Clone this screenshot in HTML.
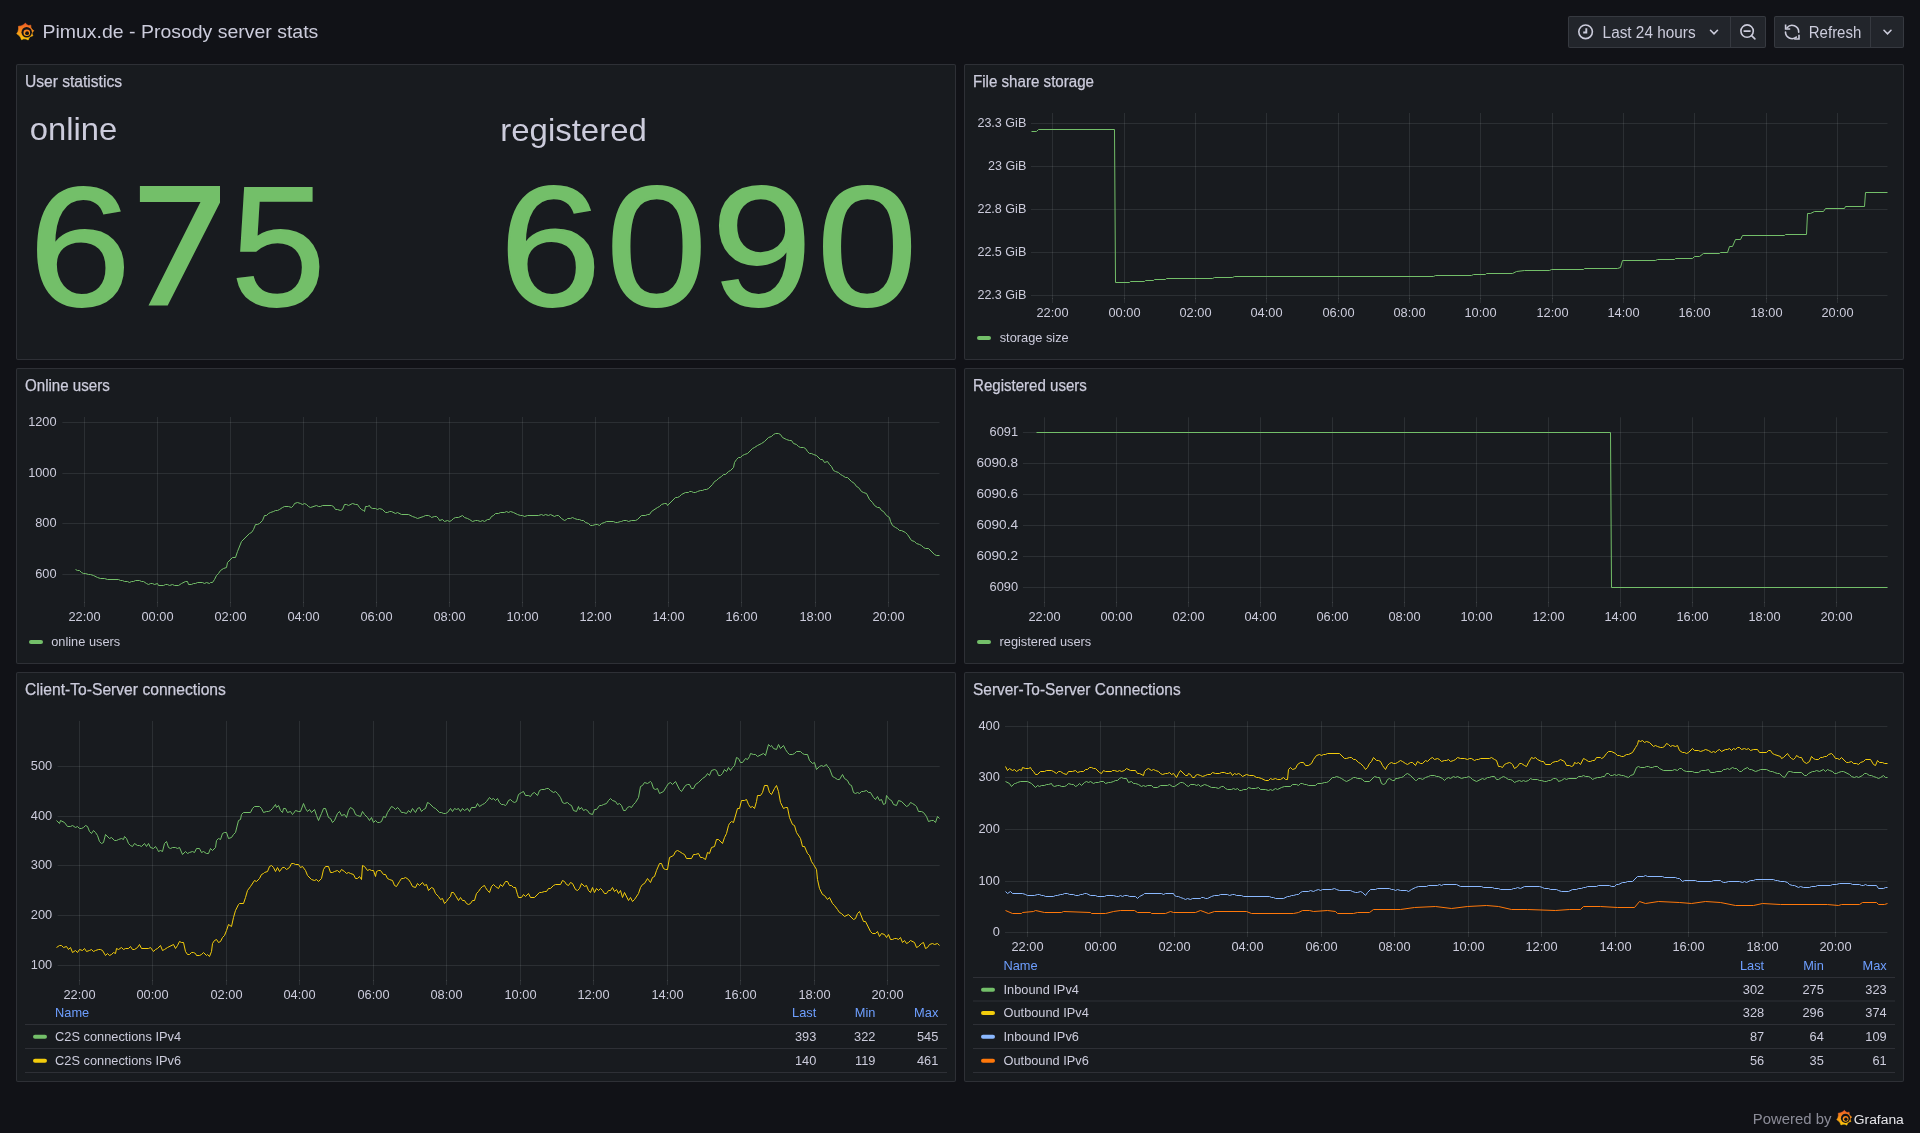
<!DOCTYPE html>
<html><head><meta charset="utf-8"><title>Pimux.de - Prosody server stats</title>
<style>
html,body{margin:0;padding:0;background:#111217;width:1920px;height:1133px;overflow:hidden;font-family:"Liberation Sans", sans-serif;}
.panel{position:absolute;background:#181b1f;border:1px solid rgba(204,204,220,0.12);border-radius:2px;}
.btn{position:absolute;background:#22252b;border:1px solid rgba(204,204,220,0.12);border-radius:2px;box-sizing:border-box;}
svg.ov{position:absolute;left:0;top:0;will-change:transform;}
svg text{font-family:"Liberation Sans", sans-serif;}
</style></head><body>
<div class="panel" style="left:16px;top:64px;width:938px;height:294px"></div><div class="panel" style="left:964px;top:64px;width:938px;height:294px"></div><div class="panel" style="left:16px;top:368px;width:938px;height:294px"></div><div class="panel" style="left:964px;top:368px;width:938px;height:294px"></div><div class="panel" style="left:16px;top:672px;width:938px;height:408px"></div><div class="panel" style="left:964px;top:672px;width:938px;height:408px"></div>
<div class="btn" style="left:1568px;top:16px;width:198px;height:32px"></div>
<div style="position:absolute;left:1730px;top:17px;width:1px;height:30px;background:rgba(204,204,220,0.12)"></div>
<div class="btn" style="left:1774px;top:16px;width:130px;height:32px"></div>
<div style="position:absolute;left:1870px;top:17px;width:1px;height:30px;background:rgba(204,204,220,0.12)"></div>
<svg class="ov" width="1920" height="1133" viewBox="0 0 1920 1133">
<line x1="1031" y1="123.5" x2="1887.5" y2="123.5" stroke="rgba(240,250,255,0.09)" stroke-width="1"/><line x1="1031" y1="166.5" x2="1887.5" y2="166.5" stroke="rgba(240,250,255,0.09)" stroke-width="1"/><line x1="1031" y1="209.5" x2="1887.5" y2="209.5" stroke="rgba(240,250,255,0.09)" stroke-width="1"/><line x1="1031" y1="252.5" x2="1887.5" y2="252.5" stroke="rgba(240,250,255,0.09)" stroke-width="1"/><line x1="1031" y1="295.5" x2="1887.5" y2="295.5" stroke="rgba(240,250,255,0.09)" stroke-width="1"/><line x1="1052.5" y1="113" x2="1052.5" y2="299" stroke="rgba(240,250,255,0.09)" stroke-width="1"/><line x1="1052.5" y1="298" x2="1052.5" y2="303" stroke="rgba(240,250,255,0.09)" stroke-width="1"/><line x1="1124.5" y1="113" x2="1124.5" y2="299" stroke="rgba(240,250,255,0.09)" stroke-width="1"/><line x1="1124.5" y1="298" x2="1124.5" y2="303" stroke="rgba(240,250,255,0.09)" stroke-width="1"/><line x1="1195.5" y1="113" x2="1195.5" y2="299" stroke="rgba(240,250,255,0.09)" stroke-width="1"/><line x1="1195.5" y1="298" x2="1195.5" y2="303" stroke="rgba(240,250,255,0.09)" stroke-width="1"/><line x1="1266.5" y1="113" x2="1266.5" y2="299" stroke="rgba(240,250,255,0.09)" stroke-width="1"/><line x1="1266.5" y1="298" x2="1266.5" y2="303" stroke="rgba(240,250,255,0.09)" stroke-width="1"/><line x1="1338.5" y1="113" x2="1338.5" y2="299" stroke="rgba(240,250,255,0.09)" stroke-width="1"/><line x1="1338.5" y1="298" x2="1338.5" y2="303" stroke="rgba(240,250,255,0.09)" stroke-width="1"/><line x1="1409.5" y1="113" x2="1409.5" y2="299" stroke="rgba(240,250,255,0.09)" stroke-width="1"/><line x1="1409.5" y1="298" x2="1409.5" y2="303" stroke="rgba(240,250,255,0.09)" stroke-width="1"/><line x1="1480.5" y1="113" x2="1480.5" y2="299" stroke="rgba(240,250,255,0.09)" stroke-width="1"/><line x1="1480.5" y1="298" x2="1480.5" y2="303" stroke="rgba(240,250,255,0.09)" stroke-width="1"/><line x1="1552.5" y1="113" x2="1552.5" y2="299" stroke="rgba(240,250,255,0.09)" stroke-width="1"/><line x1="1552.5" y1="298" x2="1552.5" y2="303" stroke="rgba(240,250,255,0.09)" stroke-width="1"/><line x1="1623.5" y1="113" x2="1623.5" y2="299" stroke="rgba(240,250,255,0.09)" stroke-width="1"/><line x1="1623.5" y1="298" x2="1623.5" y2="303" stroke="rgba(240,250,255,0.09)" stroke-width="1"/><line x1="1694.5" y1="113" x2="1694.5" y2="299" stroke="rgba(240,250,255,0.09)" stroke-width="1"/><line x1="1694.5" y1="298" x2="1694.5" y2="303" stroke="rgba(240,250,255,0.09)" stroke-width="1"/><line x1="1766.5" y1="113" x2="1766.5" y2="299" stroke="rgba(240,250,255,0.09)" stroke-width="1"/><line x1="1766.5" y1="298" x2="1766.5" y2="303" stroke="rgba(240,250,255,0.09)" stroke-width="1"/><line x1="1837.5" y1="113" x2="1837.5" y2="299" stroke="rgba(240,250,255,0.09)" stroke-width="1"/><line x1="1837.5" y1="298" x2="1837.5" y2="303" stroke="rgba(240,250,255,0.09)" stroke-width="1"/><text x="1026.3" y="126.7" font-size="12.8" fill="#ccccdc" text-anchor="end" font-weight="400"  textLength="48.9" lengthAdjust="spacingAndGlyphs">23.3 GiB</text><text x="1026.3" y="169.7" font-size="12.8" fill="#ccccdc" text-anchor="end" font-weight="400"  textLength="38.3" lengthAdjust="spacingAndGlyphs">23 GiB</text><text x="1026.3" y="212.7" font-size="12.8" fill="#ccccdc" text-anchor="end" font-weight="400"  textLength="48.9" lengthAdjust="spacingAndGlyphs">22.8 GiB</text><text x="1026.3" y="255.7" font-size="12.8" fill="#ccccdc" text-anchor="end" font-weight="400"  textLength="48.9" lengthAdjust="spacingAndGlyphs">22.5 GiB</text><text x="1026.3" y="298.7" font-size="12.8" fill="#ccccdc" text-anchor="end" font-weight="400"  textLength="48.9" lengthAdjust="spacingAndGlyphs">22.3 GiB</text><text x="1052.5" y="316.8" font-size="12.8" fill="#ccccdc" text-anchor="middle" font-weight="400" >22:00</text><text x="1124.5" y="316.8" font-size="12.8" fill="#ccccdc" text-anchor="middle" font-weight="400" >00:00</text><text x="1195.5" y="316.8" font-size="12.8" fill="#ccccdc" text-anchor="middle" font-weight="400" >02:00</text><text x="1266.5" y="316.8" font-size="12.8" fill="#ccccdc" text-anchor="middle" font-weight="400" >04:00</text><text x="1338.5" y="316.8" font-size="12.8" fill="#ccccdc" text-anchor="middle" font-weight="400" >06:00</text><text x="1409.5" y="316.8" font-size="12.8" fill="#ccccdc" text-anchor="middle" font-weight="400" >08:00</text><text x="1480.5" y="316.8" font-size="12.8" fill="#ccccdc" text-anchor="middle" font-weight="400" >10:00</text><text x="1552.5" y="316.8" font-size="12.8" fill="#ccccdc" text-anchor="middle" font-weight="400" >12:00</text><text x="1623.5" y="316.8" font-size="12.8" fill="#ccccdc" text-anchor="middle" font-weight="400" >14:00</text><text x="1694.5" y="316.8" font-size="12.8" fill="#ccccdc" text-anchor="middle" font-weight="400" >16:00</text><text x="1766.5" y="316.8" font-size="12.8" fill="#ccccdc" text-anchor="middle" font-weight="400" >18:00</text><text x="1837.5" y="316.8" font-size="12.8" fill="#ccccdc" text-anchor="middle" font-weight="400" >20:00</text><polyline points="1031.5,131.5 1036.5,131.5 1038.5,129.5 1114.5,129.5 1115.5,282.5 1129.5,282.5 1130.5,281.5 1144.5,281.5 1145.5,280.5 1153.5,280.5 1154.5,279.5 1165.5,279.5 1166.5,278.5 1212.5,278.5 1214.5,277.5 1232.5,277.5 1234.5,276.5 1433.5,276.5 1435.5,275.5 1471.5,275.5 1473.5,274.5 1485.5,274.5 1486.5,273.5 1512.5,273.5 1516.5,271.5 1524.5,270.5 1549.5,270.5 1551.5,269.5 1583.5,269.5 1584.5,268.5 1617.5,268.5 1620.5,267.5 1622.5,260.5 1655.5,260.5 1657.5,259.5 1674.5,259.5 1675.5,258.5 1692.5,258.5 1694.5,256.5 1699.5,256.5 1703.5,253.5 1719.5,253.5 1720.5,252.5 1727.5,252.5 1729.5,246.5 1732.5,246.5 1735.5,239.5 1740.5,239.5 1742.5,235.5 1784.5,235.5 1785.5,234.5 1806.5,234.5 1807.5,213.5 1810.5,213.5 1814.5,211.5 1823.5,211.5 1825.5,208.5 1844.5,208.5 1845.5,206.5 1864.5,206.5 1865.5,192.5 1887.5,192.5" fill="none" stroke="#73bf69" stroke-width="1" stroke-linejoin="miter"/><rect x="977" y="336" width="14" height="4" fill="#73bf69" rx="2"/><text x="999.7" y="342" font-size="12.8" fill="#ccccdc" text-anchor="start" font-weight="400" >storage size</text><line x1="62.4" y1="422.5" x2="939.5" y2="422.5" stroke="rgba(240,250,255,0.09)" stroke-width="1"/><line x1="62.4" y1="473.5" x2="939.5" y2="473.5" stroke="rgba(240,250,255,0.09)" stroke-width="1"/><line x1="62.4" y1="523.5" x2="939.5" y2="523.5" stroke="rgba(240,250,255,0.09)" stroke-width="1"/><line x1="62.4" y1="574.5" x2="939.5" y2="574.5" stroke="rgba(240,250,255,0.09)" stroke-width="1"/><line x1="84.5" y1="417" x2="84.5" y2="603" stroke="rgba(240,250,255,0.09)" stroke-width="1"/><line x1="84.5" y1="602" x2="84.5" y2="607" stroke="rgba(240,250,255,0.09)" stroke-width="1"/><line x1="157.5" y1="417" x2="157.5" y2="603" stroke="rgba(240,250,255,0.09)" stroke-width="1"/><line x1="157.5" y1="602" x2="157.5" y2="607" stroke="rgba(240,250,255,0.09)" stroke-width="1"/><line x1="230.5" y1="417" x2="230.5" y2="603" stroke="rgba(240,250,255,0.09)" stroke-width="1"/><line x1="230.5" y1="602" x2="230.5" y2="607" stroke="rgba(240,250,255,0.09)" stroke-width="1"/><line x1="303.5" y1="417" x2="303.5" y2="603" stroke="rgba(240,250,255,0.09)" stroke-width="1"/><line x1="303.5" y1="602" x2="303.5" y2="607" stroke="rgba(240,250,255,0.09)" stroke-width="1"/><line x1="376.5" y1="417" x2="376.5" y2="603" stroke="rgba(240,250,255,0.09)" stroke-width="1"/><line x1="376.5" y1="602" x2="376.5" y2="607" stroke="rgba(240,250,255,0.09)" stroke-width="1"/><line x1="449.5" y1="417" x2="449.5" y2="603" stroke="rgba(240,250,255,0.09)" stroke-width="1"/><line x1="449.5" y1="602" x2="449.5" y2="607" stroke="rgba(240,250,255,0.09)" stroke-width="1"/><line x1="522.5" y1="417" x2="522.5" y2="603" stroke="rgba(240,250,255,0.09)" stroke-width="1"/><line x1="522.5" y1="602" x2="522.5" y2="607" stroke="rgba(240,250,255,0.09)" stroke-width="1"/><line x1="595.5" y1="417" x2="595.5" y2="603" stroke="rgba(240,250,255,0.09)" stroke-width="1"/><line x1="595.5" y1="602" x2="595.5" y2="607" stroke="rgba(240,250,255,0.09)" stroke-width="1"/><line x1="668.5" y1="417" x2="668.5" y2="603" stroke="rgba(240,250,255,0.09)" stroke-width="1"/><line x1="668.5" y1="602" x2="668.5" y2="607" stroke="rgba(240,250,255,0.09)" stroke-width="1"/><line x1="741.5" y1="417" x2="741.5" y2="603" stroke="rgba(240,250,255,0.09)" stroke-width="1"/><line x1="741.5" y1="602" x2="741.5" y2="607" stroke="rgba(240,250,255,0.09)" stroke-width="1"/><line x1="815.5" y1="417" x2="815.5" y2="603" stroke="rgba(240,250,255,0.09)" stroke-width="1"/><line x1="815.5" y1="602" x2="815.5" y2="607" stroke="rgba(240,250,255,0.09)" stroke-width="1"/><line x1="888.5" y1="417" x2="888.5" y2="603" stroke="rgba(240,250,255,0.09)" stroke-width="1"/><line x1="888.5" y1="602" x2="888.5" y2="607" stroke="rgba(240,250,255,0.09)" stroke-width="1"/><text x="56.6" y="426.09999999999997" font-size="12.8" fill="#ccccdc" text-anchor="end" font-weight="400" >1200</text><text x="56.6" y="476.7" font-size="12.8" fill="#ccccdc" text-anchor="end" font-weight="400" >1000</text><text x="56.6" y="527.1" font-size="12.8" fill="#ccccdc" text-anchor="end" font-weight="400" >800</text><text x="56.6" y="578.0" font-size="12.8" fill="#ccccdc" text-anchor="end" font-weight="400" >600</text><text x="84.5" y="621.4" font-size="12.8" fill="#ccccdc" text-anchor="middle" font-weight="400" >22:00</text><text x="157.5" y="621.4" font-size="12.8" fill="#ccccdc" text-anchor="middle" font-weight="400" >00:00</text><text x="230.5" y="621.4" font-size="12.8" fill="#ccccdc" text-anchor="middle" font-weight="400" >02:00</text><text x="303.5" y="621.4" font-size="12.8" fill="#ccccdc" text-anchor="middle" font-weight="400" >04:00</text><text x="376.5" y="621.4" font-size="12.8" fill="#ccccdc" text-anchor="middle" font-weight="400" >06:00</text><text x="449.5" y="621.4" font-size="12.8" fill="#ccccdc" text-anchor="middle" font-weight="400" >08:00</text><text x="522.5" y="621.4" font-size="12.8" fill="#ccccdc" text-anchor="middle" font-weight="400" >10:00</text><text x="595.5" y="621.4" font-size="12.8" fill="#ccccdc" text-anchor="middle" font-weight="400" >12:00</text><text x="668.5" y="621.4" font-size="12.8" fill="#ccccdc" text-anchor="middle" font-weight="400" >14:00</text><text x="741.5" y="621.4" font-size="12.8" fill="#ccccdc" text-anchor="middle" font-weight="400" >16:00</text><text x="815.5" y="621.4" font-size="12.8" fill="#ccccdc" text-anchor="middle" font-weight="400" >18:00</text><text x="888.5" y="621.4" font-size="12.8" fill="#ccccdc" text-anchor="middle" font-weight="400" >20:00</text><polyline points="75.5,569.5 77.5,570.5 79.5,570.5 81.5,572.5 83.5,573.5 85.5,573.5 88.5,574.5 90.5,574.5 93.5,575.5 97.5,577.5 100.5,578.5 104.5,578.5 107.5,579.5 118.5,579.5 120.5,580.5 122.5,580.5 124.5,581.5 127.5,581.5 129.5,582.5 131.5,581.5 133.5,581.5 135.5,580.5 139.5,580.5 141.5,581.5 143.5,581.5 146.5,583.5 148.5,584.5 150.5,583.5 152.5,583.5 154.5,584.5 157.5,583.5 158.5,585.5 163.5,585.5 165.5,584.5 167.5,584.5 169.5,585.5 172.5,584.5 174.5,585.5 178.5,585.5 181.5,583.5 185.5,581.5 187.5,581.5 188.5,584.5 191.5,584.5 193.5,583.5 195.5,583.5 197.5,582.5 202.5,582.5 204.5,583.5 206.5,582.5 209.5,583.5 210.5,582.5 212.5,582.5 214.5,579.5 216.5,575.5 218.5,573.5 220.5,570.5 223.5,568.5 226.5,567.5 227.5,562.5 232.5,557.5 235.5,557.5 237.5,551.5 241.5,541.5 249.5,533.5 251.5,532.5 253.5,529.5 255.5,524.5 257.5,524.5 259.5,523.5 262.5,520.5 264.5,515.5 266.5,515.5 268.5,513.5 270.5,512.5 273.5,511.5 275.5,510.5 277.5,510.5 279.5,509.5 282.5,507.5 284.5,506.5 288.5,506.5 291.5,507.5 293.5,505.5 294.5,503.5 297.5,502.5 300.5,503.5 302.5,504.5 304.5,503.5 306.5,504.5 308.5,506.5 310.5,507.5 316.5,505.5 318.5,506.5 320.5,506.5 322.5,505.5 331.5,505.5 333.5,506.5 335.5,509.5 337.5,509.5 340.5,510.5 342.5,509.5 344.5,504.5 346.5,504.5 348.5,505.5 352.5,503.5 355.5,504.5 357.5,504.5 359.5,507.5 361.5,509.5 363.5,510.5 364.5,511.5 365.5,506.5 367.5,506.5 369.5,505.5 370.5,507.5 372.5,508.5 375.5,508.5 377.5,509.5 379.5,508.5 382.5,509.5 385.5,512.5 387.5,512.5 389.5,511.5 391.5,511.5 395.5,513.5 397.5,512.5 401.5,514.5 408.5,514.5 412.5,516.5 415.5,517.5 417.5,518.5 423.5,516.5 425.5,515.5 428.5,515.5 430.5,516.5 431.5,517.5 434.5,516.5 436.5,516.5 438.5,518.5 439.5,520.5 442.5,519.5 444.5,521.5 447.5,520.5 449.5,521.5 451.5,520.5 453.5,518.5 455.5,517.5 458.5,517.5 462.5,515.5 464.5,517.5 467.5,518.5 469.5,519.5 472.5,521.5 475.5,520.5 477.5,520.5 480.5,521.5 482.5,520.5 484.5,521.5 487.5,519.5 489.5,519.5 491.5,516.5 493.5,515.5 495.5,513.5 498.5,513.5 500.5,512.5 504.5,512.5 506.5,511.5 508.5,512.5 510.5,511.5 513.5,512.5 517.5,514.5 520.5,515.5 522.5,515.5 524.5,516.5 527.5,515.5 538.5,515.5 541.5,514.5 543.5,515.5 545.5,514.5 548.5,515.5 550.5,514.5 554.5,516.5 556.5,515.5 558.5,515.5 561.5,518.5 564.5,520.5 566.5,519.5 567.5,518.5 570.5,518.5 572.5,517.5 574.5,518.5 577.5,519.5 579.5,519.5 581.5,520.5 583.5,520.5 585.5,522.5 588.5,523.5 590.5,525.5 592.5,525.5 595.5,524.5 597.5,524.5 599.5,525.5 601.5,523.5 604.5,522.5 606.5,521.5 613.5,521.5 615.5,522.5 617.5,522.5 620.5,521.5 621.5,521.5 623.5,520.5 626.5,520.5 628.5,521.5 631.5,520.5 635.5,520.5 637.5,519.5 641.5,515.5 645.5,515.5 647.5,514.5 649.5,514.5 651.5,511.5 657.5,507.5 659.5,506.5 661.5,504.5 664.5,503.5 666.5,503.5 667.5,505.5 675.5,497.5 677.5,497.5 679.5,496.5 681.5,494.5 685.5,492.5 688.5,492.5 689.5,491.5 691.5,491.5 693.5,492.5 695.5,492.5 697.5,491.5 700.5,490.5 702.5,490.5 704.5,489.5 706.5,489.5 708.5,488.5 712.5,484.5 714.5,481.5 716.5,480.5 718.5,478.5 721.5,476.5 723.5,474.5 725.5,474.5 728.5,471.5 730.5,470.5 733.5,467.5 734.5,462.5 736.5,459.5 738.5,457.5 740.5,457.5 742.5,455.5 744.5,454.5 747.5,453.5 752.5,448.5 754.5,447.5 757.5,445.5 761.5,443.5 764.5,441.5 768.5,437.5 771.5,436.5 773.5,434.5 775.5,433.5 778.5,433.5 780.5,434.5 782.5,437.5 786.5,439.5 789.5,440.5 791.5,440.5 793.5,443.5 796.5,444.5 798.5,446.5 800.5,447.5 803.5,447.5 805.5,448.5 807.5,451.5 809.5,453.5 811.5,453.5 813.5,454.5 816.5,455.5 820.5,459.5 822.5,459.5 824.5,462.5 827.5,461.5 829.5,464.5 831.5,466.5 833.5,470.5 835.5,471.5 838.5,472.5 840.5,474.5 842.5,475.5 845.5,477.5 847.5,477.5 851.5,481.5 854.5,483.5 856.5,486.5 858.5,487.5 861.5,491.5 863.5,492.5 866.5,493.5 869.5,499.5 872.5,502.5 874.5,505.5 877.5,507.5 879.5,507.5 881.5,510.5 883.5,511.5 886.5,515.5 889.5,517.5 890.5,521.5 892.5,525.5 895.5,527.5 897.5,528.5 899.5,530.5 901.5,530.5 905.5,532.5 907.5,534.5 911.5,540.5 914.5,541.5 916.5,543.5 919.5,544.5 921.5,545.5 923.5,547.5 925.5,548.5 928.5,548.5 934.5,554.5 936.5,555.5 939.5,555.5" fill="none" stroke="#73bf69" stroke-width="1" stroke-linejoin="miter"/><rect x="29" y="640" width="14" height="4" fill="#73bf69" rx="2"/><text x="51.2" y="646" font-size="12.8" fill="#ccccdc" text-anchor="start" font-weight="400" >online users</text><line x1="1022.9" y1="432.5" x2="1887.7" y2="432.5" stroke="rgba(240,250,255,0.09)" stroke-width="1"/><line x1="1022.9" y1="463.5" x2="1887.7" y2="463.5" stroke="rgba(240,250,255,0.09)" stroke-width="1"/><line x1="1022.9" y1="494.5" x2="1887.7" y2="494.5" stroke="rgba(240,250,255,0.09)" stroke-width="1"/><line x1="1022.9" y1="525.5" x2="1887.7" y2="525.5" stroke="rgba(240,250,255,0.09)" stroke-width="1"/><line x1="1022.9" y1="556.5" x2="1887.7" y2="556.5" stroke="rgba(240,250,255,0.09)" stroke-width="1"/><line x1="1022.9" y1="587.5" x2="1887.7" y2="587.5" stroke="rgba(240,250,255,0.09)" stroke-width="1"/><line x1="1044.5" y1="417.3" x2="1044.5" y2="603" stroke="rgba(240,250,255,0.09)" stroke-width="1"/><line x1="1044.5" y1="602" x2="1044.5" y2="607" stroke="rgba(240,250,255,0.09)" stroke-width="1"/><line x1="1116.5" y1="417.3" x2="1116.5" y2="603" stroke="rgba(240,250,255,0.09)" stroke-width="1"/><line x1="1116.5" y1="602" x2="1116.5" y2="607" stroke="rgba(240,250,255,0.09)" stroke-width="1"/><line x1="1188.5" y1="417.3" x2="1188.5" y2="603" stroke="rgba(240,250,255,0.09)" stroke-width="1"/><line x1="1188.5" y1="602" x2="1188.5" y2="607" stroke="rgba(240,250,255,0.09)" stroke-width="1"/><line x1="1260.5" y1="417.3" x2="1260.5" y2="603" stroke="rgba(240,250,255,0.09)" stroke-width="1"/><line x1="1260.5" y1="602" x2="1260.5" y2="607" stroke="rgba(240,250,255,0.09)" stroke-width="1"/><line x1="1332.5" y1="417.3" x2="1332.5" y2="603" stroke="rgba(240,250,255,0.09)" stroke-width="1"/><line x1="1332.5" y1="602" x2="1332.5" y2="607" stroke="rgba(240,250,255,0.09)" stroke-width="1"/><line x1="1404.5" y1="417.3" x2="1404.5" y2="603" stroke="rgba(240,250,255,0.09)" stroke-width="1"/><line x1="1404.5" y1="602" x2="1404.5" y2="607" stroke="rgba(240,250,255,0.09)" stroke-width="1"/><line x1="1476.5" y1="417.3" x2="1476.5" y2="603" stroke="rgba(240,250,255,0.09)" stroke-width="1"/><line x1="1476.5" y1="602" x2="1476.5" y2="607" stroke="rgba(240,250,255,0.09)" stroke-width="1"/><line x1="1548.5" y1="417.3" x2="1548.5" y2="603" stroke="rgba(240,250,255,0.09)" stroke-width="1"/><line x1="1548.5" y1="602" x2="1548.5" y2="607" stroke="rgba(240,250,255,0.09)" stroke-width="1"/><line x1="1620.5" y1="417.3" x2="1620.5" y2="603" stroke="rgba(240,250,255,0.09)" stroke-width="1"/><line x1="1620.5" y1="602" x2="1620.5" y2="607" stroke="rgba(240,250,255,0.09)" stroke-width="1"/><line x1="1692.5" y1="417.3" x2="1692.5" y2="603" stroke="rgba(240,250,255,0.09)" stroke-width="1"/><line x1="1692.5" y1="602" x2="1692.5" y2="607" stroke="rgba(240,250,255,0.09)" stroke-width="1"/><line x1="1764.5" y1="417.3" x2="1764.5" y2="603" stroke="rgba(240,250,255,0.09)" stroke-width="1"/><line x1="1764.5" y1="602" x2="1764.5" y2="607" stroke="rgba(240,250,255,0.09)" stroke-width="1"/><line x1="1836.5" y1="417.3" x2="1836.5" y2="603" stroke="rgba(240,250,255,0.09)" stroke-width="1"/><line x1="1836.5" y1="602" x2="1836.5" y2="607" stroke="rgba(240,250,255,0.09)" stroke-width="1"/><text x="1018" y="435.9" font-size="12.8" fill="#ccccdc" text-anchor="end" font-weight="400" >6091</text><text x="1018" y="467.09999999999997" font-size="12.8" fill="#ccccdc" text-anchor="end" font-weight="400"  textLength="41.6" lengthAdjust="spacingAndGlyphs">6090.8</text><text x="1018" y="498.09999999999997" font-size="12.8" fill="#ccccdc" text-anchor="end" font-weight="400"  textLength="41.6" lengthAdjust="spacingAndGlyphs">6090.6</text><text x="1018" y="529.0" font-size="12.8" fill="#ccccdc" text-anchor="end" font-weight="400"  textLength="41.6" lengthAdjust="spacingAndGlyphs">6090.4</text><text x="1018" y="560.0" font-size="12.8" fill="#ccccdc" text-anchor="end" font-weight="400"  textLength="41.6" lengthAdjust="spacingAndGlyphs">6090.2</text><text x="1018" y="590.7" font-size="12.8" fill="#ccccdc" text-anchor="end" font-weight="400" >6090</text><text x="1044.5" y="620.8" font-size="12.8" fill="#ccccdc" text-anchor="middle" font-weight="400" >22:00</text><text x="1116.5" y="620.8" font-size="12.8" fill="#ccccdc" text-anchor="middle" font-weight="400" >00:00</text><text x="1188.5" y="620.8" font-size="12.8" fill="#ccccdc" text-anchor="middle" font-weight="400" >02:00</text><text x="1260.5" y="620.8" font-size="12.8" fill="#ccccdc" text-anchor="middle" font-weight="400" >04:00</text><text x="1332.5" y="620.8" font-size="12.8" fill="#ccccdc" text-anchor="middle" font-weight="400" >06:00</text><text x="1404.5" y="620.8" font-size="12.8" fill="#ccccdc" text-anchor="middle" font-weight="400" >08:00</text><text x="1476.5" y="620.8" font-size="12.8" fill="#ccccdc" text-anchor="middle" font-weight="400" >10:00</text><text x="1548.5" y="620.8" font-size="12.8" fill="#ccccdc" text-anchor="middle" font-weight="400" >12:00</text><text x="1620.5" y="620.8" font-size="12.8" fill="#ccccdc" text-anchor="middle" font-weight="400" >14:00</text><text x="1692.5" y="620.8" font-size="12.8" fill="#ccccdc" text-anchor="middle" font-weight="400" >16:00</text><text x="1764.5" y="620.8" font-size="12.8" fill="#ccccdc" text-anchor="middle" font-weight="400" >18:00</text><text x="1836.5" y="620.8" font-size="12.8" fill="#ccccdc" text-anchor="middle" font-weight="400" >20:00</text><polyline points="1036.5,432.5 1610.5,432.5 1611.5,587.5 1887.5,587.5" fill="none" stroke="#73bf69" stroke-width="1" stroke-linejoin="miter"/><rect x="977" y="640" width="14" height="4" fill="#73bf69" rx="2"/><text x="999.5" y="646" font-size="12.8" fill="#ccccdc" text-anchor="start" font-weight="400" >registered users</text><line x1="57.6" y1="766.5" x2="939.7" y2="766.5" stroke="rgba(240,250,255,0.09)" stroke-width="1"/><line x1="57.6" y1="816.5" x2="939.7" y2="816.5" stroke="rgba(240,250,255,0.09)" stroke-width="1"/><line x1="57.6" y1="865.5" x2="939.7" y2="865.5" stroke="rgba(240,250,255,0.09)" stroke-width="1"/><line x1="57.6" y1="915.5" x2="939.7" y2="915.5" stroke="rgba(240,250,255,0.09)" stroke-width="1"/><line x1="57.6" y1="965.5" x2="939.7" y2="965.5" stroke="rgba(240,250,255,0.09)" stroke-width="1"/><line x1="79.5" y1="720.9" x2="79.5" y2="981" stroke="rgba(240,250,255,0.09)" stroke-width="1"/><line x1="79.5" y1="980" x2="79.5" y2="985" stroke="rgba(240,250,255,0.09)" stroke-width="1"/><line x1="152.5" y1="720.9" x2="152.5" y2="981" stroke="rgba(240,250,255,0.09)" stroke-width="1"/><line x1="152.5" y1="980" x2="152.5" y2="985" stroke="rgba(240,250,255,0.09)" stroke-width="1"/><line x1="226.5" y1="720.9" x2="226.5" y2="981" stroke="rgba(240,250,255,0.09)" stroke-width="1"/><line x1="226.5" y1="980" x2="226.5" y2="985" stroke="rgba(240,250,255,0.09)" stroke-width="1"/><line x1="299.5" y1="720.9" x2="299.5" y2="981" stroke="rgba(240,250,255,0.09)" stroke-width="1"/><line x1="299.5" y1="980" x2="299.5" y2="985" stroke="rgba(240,250,255,0.09)" stroke-width="1"/><line x1="373.5" y1="720.9" x2="373.5" y2="981" stroke="rgba(240,250,255,0.09)" stroke-width="1"/><line x1="373.5" y1="980" x2="373.5" y2="985" stroke="rgba(240,250,255,0.09)" stroke-width="1"/><line x1="446.5" y1="720.9" x2="446.5" y2="981" stroke="rgba(240,250,255,0.09)" stroke-width="1"/><line x1="446.5" y1="980" x2="446.5" y2="985" stroke="rgba(240,250,255,0.09)" stroke-width="1"/><line x1="520.5" y1="720.9" x2="520.5" y2="981" stroke="rgba(240,250,255,0.09)" stroke-width="1"/><line x1="520.5" y1="980" x2="520.5" y2="985" stroke="rgba(240,250,255,0.09)" stroke-width="1"/><line x1="593.5" y1="720.9" x2="593.5" y2="981" stroke="rgba(240,250,255,0.09)" stroke-width="1"/><line x1="593.5" y1="980" x2="593.5" y2="985" stroke="rgba(240,250,255,0.09)" stroke-width="1"/><line x1="667.5" y1="720.9" x2="667.5" y2="981" stroke="rgba(240,250,255,0.09)" stroke-width="1"/><line x1="667.5" y1="980" x2="667.5" y2="985" stroke="rgba(240,250,255,0.09)" stroke-width="1"/><line x1="740.5" y1="720.9" x2="740.5" y2="981" stroke="rgba(240,250,255,0.09)" stroke-width="1"/><line x1="740.5" y1="980" x2="740.5" y2="985" stroke="rgba(240,250,255,0.09)" stroke-width="1"/><line x1="814.5" y1="720.9" x2="814.5" y2="981" stroke="rgba(240,250,255,0.09)" stroke-width="1"/><line x1="814.5" y1="980" x2="814.5" y2="985" stroke="rgba(240,250,255,0.09)" stroke-width="1"/><line x1="887.5" y1="720.9" x2="887.5" y2="981" stroke="rgba(240,250,255,0.09)" stroke-width="1"/><line x1="887.5" y1="980" x2="887.5" y2="985" stroke="rgba(240,250,255,0.09)" stroke-width="1"/><text x="52.2" y="769.8000000000001" font-size="12.8" fill="#ccccdc" text-anchor="end" font-weight="400" >500</text><text x="52.2" y="820.0" font-size="12.8" fill="#ccccdc" text-anchor="end" font-weight="400" >400</text><text x="52.2" y="869.2" font-size="12.8" fill="#ccccdc" text-anchor="end" font-weight="400" >300</text><text x="52.2" y="919.0" font-size="12.8" fill="#ccccdc" text-anchor="end" font-weight="400" >200</text><text x="52.2" y="968.9000000000001" font-size="12.8" fill="#ccccdc" text-anchor="end" font-weight="400" >100</text><text x="79.5" y="998.8" font-size="12.8" fill="#ccccdc" text-anchor="middle" font-weight="400" >22:00</text><text x="152.5" y="998.8" font-size="12.8" fill="#ccccdc" text-anchor="middle" font-weight="400" >00:00</text><text x="226.5" y="998.8" font-size="12.8" fill="#ccccdc" text-anchor="middle" font-weight="400" >02:00</text><text x="299.5" y="998.8" font-size="12.8" fill="#ccccdc" text-anchor="middle" font-weight="400" >04:00</text><text x="373.5" y="998.8" font-size="12.8" fill="#ccccdc" text-anchor="middle" font-weight="400" >06:00</text><text x="446.5" y="998.8" font-size="12.8" fill="#ccccdc" text-anchor="middle" font-weight="400" >08:00</text><text x="520.5" y="998.8" font-size="12.8" fill="#ccccdc" text-anchor="middle" font-weight="400" >10:00</text><text x="593.5" y="998.8" font-size="12.8" fill="#ccccdc" text-anchor="middle" font-weight="400" >12:00</text><text x="667.5" y="998.8" font-size="12.8" fill="#ccccdc" text-anchor="middle" font-weight="400" >14:00</text><text x="740.5" y="998.8" font-size="12.8" fill="#ccccdc" text-anchor="middle" font-weight="400" >16:00</text><text x="814.5" y="998.8" font-size="12.8" fill="#ccccdc" text-anchor="middle" font-weight="400" >18:00</text><text x="887.5" y="998.8" font-size="12.8" fill="#ccccdc" text-anchor="middle" font-weight="400" >20:00</text><polyline points="56.5,820.5 59.5,823.5 60.5,820.5 64.5,822.5 67.5,826.5 70.5,826.5 72.5,825.5 75.5,827.5 77.5,826.5 79.5,828.5 81.5,828.5 83.5,827.5 85.5,825.5 87.5,826.5 89.5,831.5 91.5,833.5 93.5,830.5 95.5,832.5 97.5,835.5 99.5,841.5 101.5,843.5 103.5,842.5 105.5,834.5 109.5,838.5 111.5,837.5 114.5,840.5 116.5,840.5 118.5,839.5 121.5,838.5 123.5,839.5 124.5,836.5 126.5,838.5 128.5,843.5 130.5,845.5 132.5,846.5 134.5,843.5 137.5,845.5 139.5,845.5 141.5,846.5 144.5,843.5 146.5,846.5 148.5,843.5 150.5,847.5 153.5,848.5 155.5,846.5 157.5,849.5 158.5,851.5 160.5,850.5 162.5,851.5 164.5,843.5 166.5,841.5 168.5,847.5 170.5,848.5 172.5,847.5 175.5,847.5 177.5,848.5 179.5,847.5 182.5,854.5 185.5,851.5 187.5,853.5 189.5,852.5 192.5,851.5 194.5,852.5 196.5,848.5 199.5,848.5 201.5,852.5 203.5,851.5 206.5,853.5 208.5,853.5 210.5,848.5 212.5,850.5 215.5,847.5 216.5,840.5 218.5,838.5 220.5,839.5 222.5,833.5 224.5,832.5 226.5,832.5 228.5,838.5 231.5,837.5 233.5,834.5 235.5,832.5 238.5,820.5 240.5,819.5 241.5,814.5 243.5,812.5 250.5,812.5 252.5,808.5 254.5,806.5 259.5,806.5 261.5,808.5 263.5,812.5 266.5,811.5 268.5,811.5 270.5,810.5 272.5,808.5 275.5,804.5 276.5,807.5 278.5,805.5 280.5,810.5 282.5,812.5 283.5,808.5 285.5,808.5 287.5,812.5 290.5,811.5 292.5,814.5 293.5,813.5 295.5,810.5 298.5,811.5 300.5,811.5 303.5,803.5 305.5,808.5 307.5,811.5 309.5,809.5 311.5,812.5 314.5,809.5 316.5,815.5 318.5,820.5 321.5,813.5 323.5,808.5 325.5,808.5 328.5,817.5 330.5,818.5 332.5,822.5 334.5,820.5 337.5,813.5 339.5,811.5 341.5,815.5 344.5,814.5 346.5,817.5 348.5,810.5 350.5,807.5 353.5,809.5 355.5,814.5 357.5,815.5 360.5,816.5 362.5,811.5 364.5,814.5 367.5,817.5 369.5,820.5 371.5,817.5 373.5,822.5 375.5,820.5 377.5,822.5 379.5,822.5 381.5,821.5 383.5,816.5 385.5,817.5 387.5,812.5 391.5,806.5 393.5,807.5 395.5,809.5 397.5,807.5 399.5,809.5 401.5,812.5 403.5,812.5 406.5,813.5 408.5,810.5 410.5,812.5 412.5,808.5 415.5,812.5 417.5,808.5 419.5,807.5 421.5,811.5 423.5,809.5 425.5,808.5 427.5,802.5 429.5,803.5 433.5,807.5 435.5,808.5 439.5,812.5 441.5,812.5 443.5,813.5 445.5,813.5 447.5,812.5 450.5,808.5 452.5,811.5 454.5,808.5 456.5,809.5 458.5,808.5 460.5,811.5 462.5,808.5 464.5,810.5 467.5,808.5 469.5,811.5 471.5,807.5 475.5,807.5 477.5,803.5 479.5,806.5 482.5,804.5 484.5,803.5 486.5,801.5 489.5,797.5 491.5,799.5 493.5,798.5 495.5,800.5 497.5,798.5 499.5,802.5 501.5,804.5 503.5,804.5 505.5,805.5 506.5,804.5 508.5,800.5 510.5,799.5 512.5,801.5 514.5,802.5 516.5,801.5 518.5,794.5 521.5,792.5 523.5,791.5 525.5,795.5 528.5,795.5 530.5,796.5 532.5,793.5 534.5,792.5 537.5,795.5 539.5,790.5 541.5,789.5 544.5,789.5 546.5,788.5 548.5,788.5 550.5,790.5 553.5,792.5 555.5,791.5 557.5,793.5 560.5,797.5 562.5,802.5 564.5,803.5 567.5,802.5 569.5,804.5 571.5,805.5 573.5,810.5 576.5,811.5 578.5,806.5 579.5,809.5 581.5,807.5 583.5,810.5 585.5,809.5 587.5,810.5 589.5,813.5 592.5,814.5 594.5,809.5 596.5,809.5 599.5,805.5 601.5,805.5 603.5,804.5 606.5,803.5 608.5,800.5 610.5,798.5 612.5,800.5 615.5,801.5 617.5,804.5 619.5,803.5 621.5,805.5 623.5,810.5 625.5,810.5 627.5,807.5 629.5,806.5 631.5,807.5 633.5,804.5 635.5,802.5 638.5,797.5 640.5,786.5 642.5,785.5 644.5,782.5 647.5,783.5 650.5,781.5 651.5,782.5 653.5,788.5 655.5,789.5 657.5,788.5 659.5,793.5 663.5,791.5 666.5,786.5 668.5,783.5 670.5,782.5 672.5,784.5 675.5,781.5 679.5,789.5 681.5,791.5 685.5,785.5 687.5,784.5 689.5,784.5 691.5,788.5 693.5,788.5 695.5,784.5 698.5,782.5 702.5,778.5 705.5,776.5 707.5,773.5 709.5,775.5 711.5,770.5 714.5,769.5 716.5,770.5 718.5,775.5 720.5,775.5 722.5,773.5 724.5,769.5 726.5,771.5 728.5,767.5 730.5,770.5 732.5,767.5 734.5,765.5 736.5,757.5 738.5,758.5 740.5,762.5 742.5,762.5 745.5,758.5 747.5,759.5 749.5,756.5 750.5,753.5 753.5,754.5 755.5,754.5 757.5,756.5 763.5,753.5 765.5,755.5 768.5,744.5 770.5,746.5 771.5,745.5 773.5,748.5 776.5,749.5 778.5,744.5 780.5,748.5 783.5,745.5 785.5,749.5 787.5,752.5 789.5,754.5 792.5,754.5 794.5,753.5 796.5,751.5 800.5,751.5 802.5,753.5 804.5,754.5 807.5,754.5 809.5,760.5 812.5,763.5 814.5,762.5 816.5,769.5 819.5,766.5 821.5,765.5 823.5,766.5 826.5,764.5 827.5,766.5 829.5,768.5 832.5,776.5 834.5,777.5 837.5,779.5 839.5,779.5 842.5,774.5 844.5,778.5 847.5,780.5 849.5,784.5 851.5,785.5 853.5,792.5 855.5,793.5 857.5,792.5 859.5,793.5 861.5,791.5 863.5,791.5 866.5,790.5 868.5,792.5 870.5,792.5 873.5,797.5 875.5,799.5 877.5,796.5 879.5,800.5 881.5,799.5 883.5,804.5 885.5,803.5 886.5,795.5 889.5,799.5 891.5,800.5 893.5,804.5 896.5,805.5 898.5,800.5 901.5,801.5 906.5,806.5 908.5,805.5 910.5,802.5 912.5,803.5 915.5,805.5 916.5,806.5 918.5,811.5 921.5,811.5 923.5,812.5 926.5,816.5 928.5,821.5 931.5,820.5 933.5,820.5 935.5,822.5 937.5,816.5 939.5,818.5" fill="none" stroke="#73bf69" stroke-width="1" stroke-linejoin="miter"/><polyline points="56.5,947.5 59.5,945.5 61.5,945.5 63.5,947.5 66.5,946.5 68.5,949.5 70.5,947.5 72.5,952.5 75.5,950.5 77.5,952.5 79.5,949.5 82.5,950.5 84.5,948.5 86.5,951.5 89.5,950.5 91.5,949.5 93.5,951.5 95.5,950.5 98.5,949.5 100.5,949.5 102.5,950.5 105.5,955.5 107.5,953.5 109.5,955.5 111.5,954.5 113.5,952.5 115.5,953.5 116.5,948.5 118.5,949.5 121.5,947.5 123.5,949.5 125.5,948.5 128.5,948.5 130.5,946.5 132.5,949.5 134.5,949.5 137.5,947.5 139.5,944.5 141.5,948.5 148.5,948.5 150.5,947.5 153.5,951.5 155.5,949.5 157.5,948.5 160.5,945.5 162.5,950.5 164.5,949.5 167.5,947.5 173.5,944.5 175.5,948.5 177.5,945.5 179.5,941.5 181.5,942.5 183.5,942.5 185.5,951.5 187.5,954.5 189.5,954.5 191.5,952.5 193.5,952.5 195.5,953.5 196.5,955.5 199.5,955.5 201.5,954.5 203.5,952.5 206.5,955.5 207.5,954.5 209.5,956.5 211.5,951.5 212.5,943.5 214.5,940.5 216.5,939.5 218.5,942.5 220.5,941.5 222.5,937.5 224.5,935.5 226.5,930.5 228.5,924.5 231.5,926.5 233.5,917.5 235.5,910.5 238.5,904.5 239.5,903.5 243.5,903.5 245.5,897.5 247.5,890.5 250.5,886.5 254.5,880.5 256.5,881.5 259.5,878.5 261.5,874.5 263.5,873.5 264.5,872.5 267.5,871.5 269.5,866.5 271.5,865.5 273.5,867.5 275.5,871.5 277.5,867.5 279.5,871.5 282.5,867.5 284.5,867.5 286.5,869.5 289.5,867.5 291.5,863.5 293.5,863.5 295.5,864.5 298.5,864.5 300.5,867.5 302.5,866.5 305.5,870.5 307.5,875.5 311.5,879.5 314.5,880.5 316.5,879.5 318.5,881.5 321.5,878.5 323.5,869.5 325.5,866.5 328.5,866.5 330.5,872.5 332.5,872.5 334.5,871.5 337.5,870.5 339.5,872.5 341.5,869.5 344.5,871.5 346.5,873.5 348.5,872.5 350.5,873.5 353.5,874.5 355.5,878.5 357.5,878.5 359.5,876.5 361.5,879.5 362.5,865.5 364.5,866.5 367.5,870.5 369.5,869.5 371.5,870.5 373.5,870.5 375.5,876.5 376.5,871.5 378.5,870.5 380.5,870.5 383.5,874.5 385.5,874.5 387.5,878.5 389.5,879.5 392.5,880.5 394.5,885.5 396.5,886.5 399.5,881.5 401.5,878.5 403.5,878.5 405.5,877.5 408.5,879.5 410.5,882.5 412.5,886.5 415.5,887.5 417.5,883.5 419.5,885.5 422.5,882.5 424.5,885.5 426.5,884.5 428.5,890.5 431.5,887.5 433.5,888.5 435.5,893.5 438.5,896.5 440.5,899.5 442.5,898.5 444.5,903.5 446.5,901.5 448.5,898.5 450.5,896.5 451.5,892.5 453.5,892.5 455.5,895.5 458.5,900.5 460.5,897.5 462.5,900.5 464.5,900.5 466.5,903.5 468.5,904.5 470.5,903.5 472.5,900.5 474.5,900.5 476.5,893.5 478.5,891.5 480.5,888.5 482.5,886.5 484.5,885.5 485.5,887.5 487.5,890.5 489.5,892.5 491.5,886.5 493.5,884.5 495.5,886.5 498.5,888.5 500.5,884.5 502.5,886.5 505.5,881.5 507.5,881.5 509.5,885.5 511.5,885.5 513.5,887.5 515.5,887.5 517.5,894.5 518.5,897.5 521.5,897.5 523.5,894.5 525.5,896.5 528.5,893.5 530.5,897.5 534.5,897.5 539.5,892.5 541.5,892.5 544.5,891.5 546.5,891.5 548.5,888.5 550.5,888.5 553.5,885.5 555.5,884.5 560.5,884.5 562.5,880.5 564.5,881.5 566.5,884.5 568.5,885.5 570.5,882.5 572.5,883.5 575.5,889.5 577.5,890.5 579.5,888.5 581.5,883.5 584.5,886.5 586.5,885.5 588.5,890.5 590.5,892.5 592.5,887.5 594.5,892.5 596.5,888.5 598.5,890.5 600.5,888.5 602.5,890.5 604.5,893.5 606.5,893.5 608.5,890.5 610.5,890.5 612.5,887.5 614.5,891.5 616.5,889.5 618.5,893.5 620.5,890.5 622.5,897.5 624.5,892.5 628.5,900.5 630.5,897.5 632.5,901.5 634.5,899.5 638.5,893.5 640.5,887.5 642.5,884.5 644.5,883.5 647.5,878.5 650.5,882.5 652.5,877.5 654.5,876.5 656.5,870.5 659.5,863.5 661.5,863.5 663.5,868.5 665.5,869.5 667.5,869.5 669.5,857.5 673.5,855.5 675.5,851.5 677.5,850.5 679.5,851.5 682.5,853.5 684.5,854.5 686.5,858.5 691.5,858.5 693.5,854.5 695.5,854.5 698.5,853.5 700.5,857.5 702.5,857.5 705.5,859.5 707.5,852.5 709.5,853.5 711.5,847.5 714.5,846.5 716.5,839.5 718.5,839.5 722.5,843.5 724.5,837.5 726.5,833.5 728.5,825.5 729.5,823.5 731.5,821.5 733.5,822.5 737.5,808.5 739.5,808.5 741.5,800.5 744.5,800.5 746.5,799.5 748.5,804.5 750.5,807.5 752.5,806.5 754.5,808.5 756.5,801.5 757.5,795.5 760.5,795.5 762.5,792.5 764.5,785.5 767.5,785.5 769.5,792.5 771.5,794.5 774.5,788.5 776.5,785.5 778.5,791.5 780.5,802.5 783.5,808.5 785.5,807.5 787.5,807.5 789.5,817.5 792.5,824.5 794.5,825.5 796.5,832.5 800.5,838.5 802.5,846.5 804.5,846.5 807.5,853.5 809.5,855.5 811.5,861.5 813.5,864.5 816.5,869.5 817.5,879.5 819.5,888.5 822.5,894.5 824.5,895.5 827.5,899.5 829.5,897.5 832.5,903.5 834.5,905.5 837.5,909.5 839.5,912.5 841.5,913.5 844.5,916.5 848.5,914.5 853.5,919.5 855.5,918.5 857.5,913.5 859.5,911.5 863.5,921.5 865.5,921.5 870.5,931.5 872.5,933.5 875.5,933.5 877.5,931.5 879.5,936.5 881.5,933.5 884.5,934.5 886.5,937.5 888.5,934.5 890.5,939.5 892.5,939.5 894.5,938.5 896.5,938.5 898.5,939.5 900.5,937.5 902.5,942.5 904.5,940.5 906.5,943.5 908.5,942.5 910.5,940.5 914.5,942.5 916.5,947.5 918.5,946.5 921.5,943.5 923.5,942.5 925.5,948.5 927.5,947.5 929.5,944.5 932.5,943.5 934.5,944.5 937.5,943.5 939.5,945.5" fill="none" stroke="#f2cc0c" stroke-width="1" stroke-linejoin="miter"/><text x="55.1" y="1017.3" font-size="12.8" fill="#6e9fff" text-anchor="start" font-weight="400" >Name</text><text x="816.3" y="1017.3" font-size="12.8" fill="#6e9fff" text-anchor="end" font-weight="400" >Last</text><text x="875.4" y="1017.3" font-size="12.8" fill="#6e9fff" text-anchor="end" font-weight="400" >Min</text><text x="938.3" y="1017.3" font-size="12.8" fill="#6e9fff" text-anchor="end" font-weight="400" >Max</text><line x1="25" y1="1024.5" x2="947" y2="1024.5" stroke="rgba(204,204,220,0.12)" stroke-width="1"/><line x1="25" y1="1048.5" x2="947" y2="1048.5" stroke="rgba(204,204,220,0.12)" stroke-width="1"/><line x1="25" y1="1072.5" x2="947" y2="1072.5" stroke="rgba(204,204,220,0.12)" stroke-width="1"/><rect x="33" y="1034.8" width="14" height="4" fill="#73bf69" rx="2"/><text x="55.1" y="1040.8" font-size="12.8" fill="#ccccdc" text-anchor="start" font-weight="400" >C2S connections IPv4</text><text x="816.3" y="1040.8" font-size="12.8" fill="#ccccdc" text-anchor="end" font-weight="400" >393</text><text x="875.4" y="1040.8" font-size="12.8" fill="#ccccdc" text-anchor="end" font-weight="400" >322</text><text x="938.3" y="1040.8" font-size="12.8" fill="#ccccdc" text-anchor="end" font-weight="400" >545</text><rect x="33" y="1058.8" width="14" height="4" fill="#f2cc0c" rx="2"/><text x="55.1" y="1064.8" font-size="12.8" fill="#ccccdc" text-anchor="start" font-weight="400" >C2S connections IPv6</text><text x="816.3" y="1064.8" font-size="12.8" fill="#ccccdc" text-anchor="end" font-weight="400" >140</text><text x="875.4" y="1064.8" font-size="12.8" fill="#ccccdc" text-anchor="end" font-weight="400" >119</text><text x="938.3" y="1064.8" font-size="12.8" fill="#ccccdc" text-anchor="end" font-weight="400" >461</text><line x1="1005" y1="726.5" x2="1887.4" y2="726.5" stroke="rgba(240,250,255,0.09)" stroke-width="1"/><line x1="1005" y1="777.5" x2="1887.4" y2="777.5" stroke="rgba(240,250,255,0.09)" stroke-width="1"/><line x1="1005" y1="829.5" x2="1887.4" y2="829.5" stroke="rgba(240,250,255,0.09)" stroke-width="1"/><line x1="1005" y1="881.5" x2="1887.4" y2="881.5" stroke="rgba(240,250,255,0.09)" stroke-width="1"/><line x1="1005" y1="932.5" x2="1887.4" y2="932.5" stroke="rgba(240,250,255,0.09)" stroke-width="1"/><line x1="1027.5" y1="721.2" x2="1027.5" y2="933" stroke="rgba(240,250,255,0.09)" stroke-width="1"/><line x1="1027.5" y1="932" x2="1027.5" y2="937" stroke="rgba(240,250,255,0.09)" stroke-width="1"/><line x1="1100.5" y1="721.2" x2="1100.5" y2="933" stroke="rgba(240,250,255,0.09)" stroke-width="1"/><line x1="1100.5" y1="932" x2="1100.5" y2="937" stroke="rgba(240,250,255,0.09)" stroke-width="1"/><line x1="1174.5" y1="721.2" x2="1174.5" y2="933" stroke="rgba(240,250,255,0.09)" stroke-width="1"/><line x1="1174.5" y1="932" x2="1174.5" y2="937" stroke="rgba(240,250,255,0.09)" stroke-width="1"/><line x1="1247.5" y1="721.2" x2="1247.5" y2="933" stroke="rgba(240,250,255,0.09)" stroke-width="1"/><line x1="1247.5" y1="932" x2="1247.5" y2="937" stroke="rgba(240,250,255,0.09)" stroke-width="1"/><line x1="1321.5" y1="721.2" x2="1321.5" y2="933" stroke="rgba(240,250,255,0.09)" stroke-width="1"/><line x1="1321.5" y1="932" x2="1321.5" y2="937" stroke="rgba(240,250,255,0.09)" stroke-width="1"/><line x1="1394.5" y1="721.2" x2="1394.5" y2="933" stroke="rgba(240,250,255,0.09)" stroke-width="1"/><line x1="1394.5" y1="932" x2="1394.5" y2="937" stroke="rgba(240,250,255,0.09)" stroke-width="1"/><line x1="1468.5" y1="721.2" x2="1468.5" y2="933" stroke="rgba(240,250,255,0.09)" stroke-width="1"/><line x1="1468.5" y1="932" x2="1468.5" y2="937" stroke="rgba(240,250,255,0.09)" stroke-width="1"/><line x1="1541.5" y1="721.2" x2="1541.5" y2="933" stroke="rgba(240,250,255,0.09)" stroke-width="1"/><line x1="1541.5" y1="932" x2="1541.5" y2="937" stroke="rgba(240,250,255,0.09)" stroke-width="1"/><line x1="1615.5" y1="721.2" x2="1615.5" y2="933" stroke="rgba(240,250,255,0.09)" stroke-width="1"/><line x1="1615.5" y1="932" x2="1615.5" y2="937" stroke="rgba(240,250,255,0.09)" stroke-width="1"/><line x1="1688.5" y1="721.2" x2="1688.5" y2="933" stroke="rgba(240,250,255,0.09)" stroke-width="1"/><line x1="1688.5" y1="932" x2="1688.5" y2="937" stroke="rgba(240,250,255,0.09)" stroke-width="1"/><line x1="1762.5" y1="721.2" x2="1762.5" y2="933" stroke="rgba(240,250,255,0.09)" stroke-width="1"/><line x1="1762.5" y1="932" x2="1762.5" y2="937" stroke="rgba(240,250,255,0.09)" stroke-width="1"/><line x1="1835.5" y1="721.2" x2="1835.5" y2="933" stroke="rgba(240,250,255,0.09)" stroke-width="1"/><line x1="1835.5" y1="932" x2="1835.5" y2="937" stroke="rgba(240,250,255,0.09)" stroke-width="1"/><text x="999.8" y="730.0" font-size="12.8" fill="#ccccdc" text-anchor="end" font-weight="400" >400</text><text x="999.8" y="781.4000000000001" font-size="12.8" fill="#ccccdc" text-anchor="end" font-weight="400" >300</text><text x="999.8" y="832.9000000000001" font-size="12.8" fill="#ccccdc" text-anchor="end" font-weight="400" >200</text><text x="999.8" y="884.9000000000001" font-size="12.8" fill="#ccccdc" text-anchor="end" font-weight="400" >100</text><text x="999.8" y="936.1" font-size="12.8" fill="#ccccdc" text-anchor="end" font-weight="400" >0</text><text x="1027.5" y="950.5" font-size="12.8" fill="#ccccdc" text-anchor="middle" font-weight="400" >22:00</text><text x="1100.5" y="950.5" font-size="12.8" fill="#ccccdc" text-anchor="middle" font-weight="400" >00:00</text><text x="1174.5" y="950.5" font-size="12.8" fill="#ccccdc" text-anchor="middle" font-weight="400" >02:00</text><text x="1247.5" y="950.5" font-size="12.8" fill="#ccccdc" text-anchor="middle" font-weight="400" >04:00</text><text x="1321.5" y="950.5" font-size="12.8" fill="#ccccdc" text-anchor="middle" font-weight="400" >06:00</text><text x="1394.5" y="950.5" font-size="12.8" fill="#ccccdc" text-anchor="middle" font-weight="400" >08:00</text><text x="1468.5" y="950.5" font-size="12.8" fill="#ccccdc" text-anchor="middle" font-weight="400" >10:00</text><text x="1541.5" y="950.5" font-size="12.8" fill="#ccccdc" text-anchor="middle" font-weight="400" >12:00</text><text x="1615.5" y="950.5" font-size="12.8" fill="#ccccdc" text-anchor="middle" font-weight="400" >14:00</text><text x="1688.5" y="950.5" font-size="12.8" fill="#ccccdc" text-anchor="middle" font-weight="400" >16:00</text><text x="1762.5" y="950.5" font-size="12.8" fill="#ccccdc" text-anchor="middle" font-weight="400" >18:00</text><text x="1835.5" y="950.5" font-size="12.8" fill="#ccccdc" text-anchor="middle" font-weight="400" >20:00</text><polyline points="1005.5,910.5 1012.5,913.5 1021.5,913.5 1022.5,912.5 1033.5,911.5 1035.5,910.5 1044.5,912.5 1061.5,912.5 1063.5,911.5 1090.5,912.5 1091.5,913.5 1105.5,913.5 1113.5,911.5 1120.5,910.5 1134.5,910.5 1137.5,912.5 1150.5,912.5 1151.5,913.5 1165.5,913.5 1170.5,911.5 1173.5,912.5 1195.5,912.5 1200.5,910.5 1208.5,913.5 1214.5,911.5 1246.5,911.5 1251.5,913.5 1293.5,913.5 1298.5,912.5 1302.5,910.5 1309.5,910.5 1313.5,911.5 1327.5,910.5 1335.5,911.5 1337.5,913.5 1353.5,913.5 1357.5,912.5 1369.5,912.5 1373.5,909.5 1400.5,909.5 1414.5,907.5 1435.5,906.5 1451.5,908.5 1467.5,906.5 1486.5,905.5 1498.5,906.5 1511.5,909.5 1527.5,909.5 1555.5,910.5 1569.5,909.5 1580.5,909.5 1583.5,906.5 1600.5,906.5 1617.5,907.5 1634.5,907.5 1639.5,901.5 1645.5,903.5 1658.5,901.5 1679.5,902.5 1691.5,903.5 1705.5,901.5 1720.5,902.5 1735.5,905.5 1753.5,905.5 1762.5,903.5 1780.5,904.5 1827.5,904.5 1838.5,905.5 1841.5,904.5 1859.5,904.5 1862.5,902.5 1876.5,902.5 1878.5,904.5 1884.5,904.5 1887.5,903.5" fill="none" stroke="#ff780a" stroke-width="1" stroke-linejoin="miter"/><polyline points="1005.5,891.5 1007.5,893.5 1010.5,891.5 1012.5,893.5 1022.5,893.5 1025.5,894.5 1027.5,895.5 1034.5,895.5 1037.5,894.5 1039.5,894.5 1041.5,895.5 1043.5,895.5 1045.5,896.5 1053.5,896.5 1055.5,895.5 1057.5,895.5 1060.5,894.5 1062.5,894.5 1064.5,893.5 1067.5,893.5 1069.5,894.5 1073.5,894.5 1075.5,895.5 1078.5,895.5 1080.5,894.5 1082.5,894.5 1084.5,893.5 1086.5,893.5 1090.5,895.5 1095.5,895.5 1097.5,896.5 1104.5,896.5 1106.5,895.5 1113.5,895.5 1116.5,896.5 1118.5,896.5 1120.5,895.5 1122.5,896.5 1124.5,895.5 1127.5,895.5 1129.5,896.5 1135.5,896.5 1137.5,898.5 1139.5,896.5 1143.5,894.5 1144.5,893.5 1161.5,893.5 1163.5,894.5 1165.5,893.5 1173.5,893.5 1174.5,895.5 1176.5,896.5 1178.5,896.5 1180.5,897.5 1183.5,898.5 1185.5,899.5 1187.5,898.5 1190.5,899.5 1192.5,898.5 1200.5,898.5 1201.5,897.5 1203.5,897.5 1205.5,898.5 1207.5,898.5 1211.5,896.5 1214.5,895.5 1218.5,895.5 1220.5,894.5 1227.5,894.5 1229.5,895.5 1232.5,894.5 1234.5,894.5 1236.5,895.5 1241.5,895.5 1243.5,896.5 1269.5,896.5 1271.5,897.5 1273.5,897.5 1275.5,898.5 1283.5,898.5 1287.5,896.5 1289.5,896.5 1291.5,895.5 1293.5,895.5 1296.5,894.5 1298.5,894.5 1300.5,892.5 1302.5,891.5 1308.5,891.5 1310.5,890.5 1313.5,891.5 1315.5,890.5 1318.5,889.5 1320.5,890.5 1322.5,889.5 1331.5,889.5 1334.5,888.5 1336.5,889.5 1339.5,890.5 1350.5,890.5 1352.5,891.5 1355.5,892.5 1357.5,892.5 1360.5,891.5 1362.5,892.5 1365.5,895.5 1367.5,892.5 1370.5,889.5 1375.5,889.5 1377.5,888.5 1389.5,888.5 1391.5,889.5 1393.5,889.5 1395.5,890.5 1397.5,889.5 1400.5,890.5 1406.5,890.5 1408.5,891.5 1411.5,889.5 1415.5,887.5 1418.5,886.5 1426.5,886.5 1428.5,885.5 1437.5,885.5 1439.5,884.5 1441.5,885.5 1443.5,884.5 1456.5,884.5 1460.5,886.5 1481.5,886.5 1483.5,887.5 1492.5,887.5 1494.5,888.5 1498.5,888.5 1500.5,889.5 1511.5,889.5 1513.5,888.5 1515.5,888.5 1517.5,887.5 1520.5,888.5 1524.5,886.5 1539.5,886.5 1542.5,887.5 1544.5,888.5 1548.5,888.5 1550.5,889.5 1556.5,889.5 1558.5,890.5 1561.5,891.5 1568.5,891.5 1572.5,889.5 1576.5,889.5 1578.5,888.5 1581.5,888.5 1583.5,887.5 1585.5,887.5 1587.5,886.5 1596.5,886.5 1598.5,885.5 1609.5,885.5 1611.5,886.5 1614.5,886.5 1616.5,884.5 1618.5,884.5 1622.5,882.5 1625.5,882.5 1627.5,881.5 1632.5,881.5 1637.5,876.5 1643.5,876.5 1645.5,875.5 1647.5,876.5 1662.5,876.5 1664.5,877.5 1675.5,877.5 1677.5,878.5 1679.5,878.5 1682.5,881.5 1684.5,880.5 1695.5,880.5 1697.5,881.5 1711.5,881.5 1713.5,880.5 1720.5,880.5 1721.5,881.5 1723.5,882.5 1725.5,882.5 1728.5,881.5 1739.5,881.5 1742.5,882.5 1744.5,881.5 1746.5,882.5 1750.5,880.5 1753.5,880.5 1755.5,879.5 1773.5,879.5 1775.5,880.5 1777.5,880.5 1780.5,881.5 1784.5,881.5 1787.5,882.5 1789.5,884.5 1792.5,885.5 1794.5,885.5 1798.5,887.5 1800.5,886.5 1803.5,887.5 1809.5,887.5 1811.5,886.5 1815.5,886.5 1817.5,885.5 1830.5,885.5 1832.5,884.5 1836.5,884.5 1839.5,883.5 1850.5,883.5 1852.5,884.5 1859.5,884.5 1861.5,885.5 1863.5,885.5 1865.5,884.5 1867.5,885.5 1876.5,885.5 1878.5,888.5 1883.5,888.5 1885.5,887.5 1887.5,887.5" fill="none" stroke="#8ab8ff" stroke-width="1" stroke-linejoin="miter"/><polyline points="1005.5,781.5 1009.5,783.5 1011.5,786.5 1014.5,783.5 1015.5,783.5 1017.5,782.5 1020.5,781.5 1027.5,781.5 1031.5,783.5 1035.5,787.5 1037.5,785.5 1039.5,786.5 1041.5,785.5 1044.5,785.5 1046.5,784.5 1048.5,784.5 1051.5,783.5 1052.5,785.5 1054.5,786.5 1057.5,785.5 1059.5,785.5 1061.5,786.5 1064.5,786.5 1066.5,785.5 1068.5,783.5 1071.5,784.5 1073.5,784.5 1075.5,786.5 1077.5,785.5 1079.5,783.5 1081.5,785.5 1084.5,782.5 1086.5,781.5 1088.5,782.5 1090.5,781.5 1093.5,783.5 1095.5,782.5 1098.5,782.5 1100.5,781.5 1103.5,781.5 1105.5,783.5 1108.5,782.5 1110.5,782.5 1113.5,781.5 1115.5,780.5 1117.5,780.5 1119.5,778.5 1121.5,777.5 1123.5,778.5 1126.5,778.5 1128.5,782.5 1131.5,781.5 1133.5,783.5 1135.5,783.5 1138.5,784.5 1141.5,786.5 1143.5,785.5 1145.5,786.5 1147.5,785.5 1151.5,785.5 1153.5,787.5 1157.5,787.5 1160.5,785.5 1167.5,785.5 1169.5,784.5 1172.5,786.5 1174.5,786.5 1180.5,782.5 1182.5,782.5 1184.5,783.5 1186.5,785.5 1188.5,786.5 1190.5,784.5 1194.5,784.5 1196.5,785.5 1198.5,784.5 1200.5,786.5 1204.5,784.5 1207.5,785.5 1211.5,787.5 1215.5,787.5 1218.5,788.5 1221.5,786.5 1223.5,786.5 1225.5,788.5 1227.5,789.5 1231.5,789.5 1233.5,788.5 1235.5,789.5 1237.5,788.5 1239.5,790.5 1241.5,790.5 1243.5,789.5 1246.5,789.5 1248.5,787.5 1251.5,788.5 1255.5,788.5 1258.5,787.5 1260.5,789.5 1265.5,789.5 1268.5,790.5 1270.5,789.5 1272.5,790.5 1275.5,788.5 1277.5,789.5 1281.5,787.5 1284.5,786.5 1290.5,786.5 1292.5,784.5 1296.5,784.5 1298.5,785.5 1300.5,783.5 1302.5,783.5 1304.5,784.5 1306.5,784.5 1308.5,785.5 1315.5,785.5 1317.5,783.5 1321.5,783.5 1324.5,782.5 1326.5,782.5 1328.5,781.5 1332.5,777.5 1334.5,777.5 1336.5,776.5 1339.5,777.5 1341.5,778.5 1344.5,780.5 1346.5,781.5 1350.5,779.5 1353.5,777.5 1355.5,777.5 1357.5,778.5 1360.5,778.5 1362.5,779.5 1364.5,781.5 1369.5,781.5 1374.5,776.5 1377.5,777.5 1379.5,777.5 1381.5,783.5 1383.5,784.5 1385.5,783.5 1387.5,779.5 1389.5,778.5 1392.5,780.5 1394.5,780.5 1395.5,778.5 1397.5,778.5 1400.5,777.5 1401.5,777.5 1403.5,776.5 1405.5,774.5 1407.5,773.5 1410.5,775.5 1415.5,780.5 1416.5,780.5 1418.5,778.5 1420.5,778.5 1422.5,779.5 1425.5,777.5 1428.5,776.5 1430.5,775.5 1434.5,775.5 1436.5,776.5 1438.5,776.5 1442.5,778.5 1444.5,780.5 1446.5,778.5 1448.5,777.5 1450.5,778.5 1453.5,776.5 1455.5,777.5 1457.5,776.5 1461.5,778.5 1464.5,777.5 1466.5,777.5 1468.5,776.5 1470.5,777.5 1472.5,779.5 1476.5,781.5 1482.5,778.5 1484.5,779.5 1487.5,777.5 1489.5,777.5 1491.5,776.5 1494.5,776.5 1496.5,779.5 1498.5,779.5 1501.5,777.5 1503.5,776.5 1505.5,777.5 1508.5,779.5 1510.5,779.5 1512.5,780.5 1514.5,782.5 1516.5,781.5 1519.5,780.5 1521.5,781.5 1523.5,780.5 1525.5,781.5 1528.5,780.5 1530.5,778.5 1532.5,779.5 1537.5,779.5 1539.5,780.5 1541.5,780.5 1544.5,781.5 1546.5,781.5 1548.5,780.5 1550.5,780.5 1553.5,778.5 1555.5,778.5 1557.5,779.5 1558.5,781.5 1561.5,780.5 1564.5,778.5 1566.5,779.5 1568.5,778.5 1576.5,778.5 1578.5,776.5 1581.5,776.5 1583.5,775.5 1585.5,776.5 1588.5,776.5 1590.5,777.5 1592.5,779.5 1594.5,778.5 1597.5,777.5 1600.5,777.5 1602.5,776.5 1604.5,776.5 1606.5,773.5 1608.5,773.5 1610.5,775.5 1612.5,775.5 1614.5,774.5 1616.5,775.5 1618.5,774.5 1621.5,775.5 1623.5,775.5 1625.5,776.5 1628.5,777.5 1630.5,775.5 1633.5,774.5 1636.5,767.5 1638.5,766.5 1640.5,767.5 1644.5,767.5 1646.5,766.5 1648.5,766.5 1650.5,767.5 1652.5,767.5 1654.5,766.5 1657.5,766.5 1659.5,768.5 1663.5,770.5 1672.5,770.5 1674.5,769.5 1677.5,770.5 1679.5,768.5 1681.5,768.5 1683.5,770.5 1686.5,771.5 1692.5,771.5 1694.5,772.5 1698.5,772.5 1701.5,770.5 1705.5,770.5 1708.5,769.5 1710.5,772.5 1714.5,772.5 1716.5,771.5 1721.5,771.5 1723.5,769.5 1725.5,769.5 1727.5,768.5 1729.5,769.5 1732.5,767.5 1734.5,768.5 1736.5,768.5 1739.5,771.5 1741.5,771.5 1743.5,769.5 1747.5,767.5 1749.5,769.5 1751.5,769.5 1755.5,771.5 1758.5,770.5 1760.5,769.5 1766.5,769.5 1770.5,771.5 1772.5,771.5 1774.5,772.5 1777.5,773.5 1779.5,773.5 1782.5,776.5 1784.5,777.5 1788.5,771.5 1790.5,771.5 1793.5,772.5 1801.5,772.5 1804.5,775.5 1806.5,775.5 1808.5,773.5 1812.5,771.5 1814.5,771.5 1816.5,770.5 1819.5,771.5 1823.5,769.5 1825.5,771.5 1827.5,769.5 1829.5,770.5 1832.5,771.5 1834.5,773.5 1836.5,773.5 1838.5,772.5 1841.5,771.5 1843.5,771.5 1849.5,774.5 1851.5,776.5 1854.5,777.5 1856.5,776.5 1858.5,777.5 1862.5,775.5 1864.5,773.5 1866.5,773.5 1869.5,775.5 1871.5,775.5 1873.5,776.5 1876.5,777.5 1878.5,778.5 1880.5,777.5 1883.5,775.5 1885.5,777.5 1887.5,777.5" fill="none" stroke="#73bf69" stroke-width="1" stroke-linejoin="miter"/><polyline points="1005.5,766.5 1007.5,770.5 1009.5,768.5 1012.5,770.5 1014.5,769.5 1016.5,771.5 1019.5,769.5 1021.5,770.5 1022.5,767.5 1025.5,768.5 1028.5,768.5 1030.5,767.5 1031.5,769.5 1033.5,771.5 1035.5,774.5 1037.5,774.5 1040.5,771.5 1044.5,771.5 1046.5,770.5 1051.5,770.5 1053.5,771.5 1056.5,773.5 1058.5,771.5 1060.5,771.5 1063.5,773.5 1066.5,774.5 1068.5,771.5 1072.5,771.5 1075.5,770.5 1077.5,772.5 1080.5,771.5 1083.5,771.5 1085.5,769.5 1087.5,769.5 1089.5,767.5 1091.5,767.5 1093.5,768.5 1095.5,768.5 1099.5,772.5 1101.5,773.5 1103.5,770.5 1105.5,771.5 1111.5,771.5 1112.5,770.5 1114.5,770.5 1117.5,771.5 1119.5,770.5 1121.5,771.5 1124.5,770.5 1126.5,768.5 1130.5,770.5 1135.5,770.5 1137.5,773.5 1139.5,773.5 1143.5,775.5 1144.5,771.5 1146.5,769.5 1148.5,768.5 1151.5,770.5 1153.5,769.5 1155.5,770.5 1158.5,771.5 1160.5,773.5 1162.5,774.5 1165.5,773.5 1167.5,773.5 1169.5,772.5 1171.5,774.5 1173.5,773.5 1176.5,777.5 1178.5,773.5 1180.5,770.5 1185.5,775.5 1187.5,775.5 1188.5,773.5 1190.5,774.5 1192.5,777.5 1194.5,777.5 1195.5,775.5 1197.5,774.5 1200.5,775.5 1202.5,776.5 1205.5,775.5 1207.5,774.5 1210.5,774.5 1212.5,772.5 1215.5,773.5 1219.5,773.5 1221.5,772.5 1224.5,772.5 1226.5,773.5 1228.5,773.5 1230.5,772.5 1232.5,775.5 1234.5,773.5 1236.5,774.5 1238.5,773.5 1240.5,774.5 1242.5,776.5 1246.5,774.5 1249.5,775.5 1253.5,775.5 1256.5,777.5 1258.5,777.5 1261.5,778.5 1265.5,780.5 1268.5,780.5 1270.5,778.5 1272.5,779.5 1275.5,778.5 1277.5,779.5 1280.5,779.5 1283.5,777.5 1285.5,779.5 1287.5,779.5 1288.5,769.5 1290.5,767.5 1292.5,769.5 1295.5,768.5 1297.5,764.5 1300.5,762.5 1303.5,762.5 1305.5,765.5 1308.5,765.5 1311.5,763.5 1313.5,759.5 1316.5,755.5 1319.5,754.5 1321.5,755.5 1323.5,754.5 1325.5,754.5 1327.5,753.5 1339.5,753.5 1344.5,758.5 1346.5,758.5 1349.5,757.5 1351.5,757.5 1353.5,759.5 1355.5,759.5 1358.5,762.5 1360.5,763.5 1363.5,766.5 1365.5,769.5 1367.5,767.5 1369.5,763.5 1371.5,761.5 1373.5,757.5 1376.5,760.5 1378.5,760.5 1380.5,761.5 1382.5,765.5 1385.5,769.5 1387.5,765.5 1389.5,763.5 1391.5,762.5 1393.5,763.5 1395.5,763.5 1397.5,762.5 1400.5,760.5 1402.5,761.5 1405.5,763.5 1407.5,764.5 1410.5,762.5 1412.5,762.5 1415.5,765.5 1417.5,761.5 1420.5,763.5 1422.5,763.5 1425.5,760.5 1427.5,761.5 1430.5,758.5 1432.5,757.5 1434.5,759.5 1437.5,758.5 1439.5,759.5 1441.5,761.5 1444.5,760.5 1446.5,760.5 1448.5,759.5 1450.5,761.5 1453.5,760.5 1455.5,759.5 1457.5,757.5 1460.5,758.5 1464.5,758.5 1467.5,759.5 1469.5,758.5 1471.5,758.5 1474.5,760.5 1476.5,759.5 1478.5,759.5 1480.5,758.5 1489.5,758.5 1491.5,757.5 1494.5,759.5 1496.5,760.5 1498.5,766.5 1500.5,766.5 1502.5,767.5 1504.5,764.5 1506.5,763.5 1509.5,762.5 1511.5,763.5 1512.5,764.5 1514.5,768.5 1517.5,766.5 1519.5,763.5 1521.5,763.5 1524.5,765.5 1526.5,766.5 1528.5,762.5 1531.5,757.5 1533.5,758.5 1535.5,757.5 1537.5,759.5 1541.5,761.5 1543.5,761.5 1545.5,764.5 1550.5,764.5 1552.5,762.5 1555.5,761.5 1557.5,761.5 1560.5,759.5 1564.5,761.5 1566.5,765.5 1569.5,765.5 1571.5,766.5 1573.5,765.5 1574.5,762.5 1576.5,763.5 1578.5,762.5 1580.5,764.5 1583.5,758.5 1585.5,759.5 1588.5,761.5 1590.5,761.5 1592.5,760.5 1594.5,760.5 1596.5,757.5 1600.5,757.5 1601.5,758.5 1603.5,757.5 1606.5,753.5 1608.5,751.5 1611.5,751.5 1615.5,753.5 1617.5,755.5 1619.5,755.5 1621.5,756.5 1623.5,756.5 1626.5,754.5 1628.5,754.5 1632.5,752.5 1635.5,747.5 1637.5,744.5 1638.5,740.5 1640.5,741.5 1642.5,740.5 1644.5,742.5 1646.5,741.5 1649.5,742.5 1653.5,746.5 1655.5,745.5 1657.5,746.5 1660.5,747.5 1662.5,747.5 1664.5,746.5 1666.5,743.5 1668.5,744.5 1670.5,746.5 1672.5,745.5 1675.5,746.5 1677.5,745.5 1679.5,750.5 1682.5,752.5 1684.5,752.5 1686.5,753.5 1688.5,752.5 1692.5,748.5 1694.5,750.5 1698.5,750.5 1700.5,751.5 1703.5,750.5 1705.5,749.5 1708.5,750.5 1711.5,752.5 1713.5,751.5 1715.5,752.5 1717.5,750.5 1719.5,749.5 1721.5,751.5 1725.5,749.5 1727.5,749.5 1729.5,748.5 1731.5,750.5 1733.5,748.5 1735.5,749.5 1737.5,747.5 1739.5,747.5 1741.5,749.5 1744.5,748.5 1746.5,749.5 1748.5,748.5 1750.5,750.5 1753.5,749.5 1757.5,749.5 1759.5,752.5 1766.5,752.5 1768.5,750.5 1770.5,750.5 1772.5,753.5 1774.5,754.5 1780.5,756.5 1781.5,758.5 1783.5,757.5 1787.5,753.5 1789.5,756.5 1791.5,758.5 1793.5,759.5 1795.5,757.5 1796.5,755.5 1799.5,757.5 1801.5,757.5 1803.5,761.5 1806.5,763.5 1809.5,761.5 1811.5,756.5 1813.5,758.5 1815.5,759.5 1818.5,759.5 1820.5,757.5 1822.5,757.5 1824.5,756.5 1826.5,756.5 1828.5,754.5 1831.5,753.5 1833.5,755.5 1835.5,758.5 1837.5,758.5 1839.5,759.5 1841.5,757.5 1846.5,762.5 1848.5,762.5 1851.5,761.5 1853.5,763.5 1856.5,763.5 1858.5,764.5 1860.5,762.5 1863.5,761.5 1865.5,759.5 1870.5,759.5 1873.5,764.5 1875.5,765.5 1877.5,760.5 1879.5,762.5 1882.5,762.5 1884.5,763.5 1887.5,763.5" fill="none" stroke="#f2cc0c" stroke-width="1" stroke-linejoin="miter"/><text x="1003.5" y="970" font-size="12.8" fill="#6e9fff" text-anchor="start" font-weight="400" >Name</text><text x="1764.2" y="970" font-size="12.8" fill="#6e9fff" text-anchor="end" font-weight="400" >Last</text><text x="1823.8" y="970" font-size="12.8" fill="#6e9fff" text-anchor="end" font-weight="400" >Min</text><text x="1886.7" y="970" font-size="12.8" fill="#6e9fff" text-anchor="end" font-weight="400" >Max</text><line x1="973" y1="977.5" x2="1895" y2="977.5" stroke="rgba(204,204,220,0.12)" stroke-width="1"/><line x1="973" y1="1001" x2="1895" y2="1001" stroke="rgba(204,204,220,0.12)" stroke-width="1"/><line x1="973" y1="1024.5" x2="1895" y2="1024.5" stroke="rgba(204,204,220,0.12)" stroke-width="1"/><line x1="973" y1="1048.5" x2="1895" y2="1048.5" stroke="rgba(204,204,220,0.12)" stroke-width="1"/><line x1="973" y1="1072.5" x2="1895" y2="1072.5" stroke="rgba(204,204,220,0.12)" stroke-width="1"/><rect x="981" y="987.8" width="14" height="4" fill="#73bf69" rx="2"/><text x="1003.5" y="993.8" font-size="12.8" fill="#ccccdc" text-anchor="start" font-weight="400" >Inbound IPv4</text><text x="1764.2" y="993.8" font-size="12.8" fill="#ccccdc" text-anchor="end" font-weight="400" >302</text><text x="1823.8" y="993.8" font-size="12.8" fill="#ccccdc" text-anchor="end" font-weight="400" >275</text><text x="1886.7" y="993.8" font-size="12.8" fill="#ccccdc" text-anchor="end" font-weight="400" >323</text><rect x="981" y="1011" width="14" height="4" fill="#f2cc0c" rx="2"/><text x="1003.5" y="1017" font-size="12.8" fill="#ccccdc" text-anchor="start" font-weight="400" >Outbound IPv4</text><text x="1764.2" y="1017" font-size="12.8" fill="#ccccdc" text-anchor="end" font-weight="400" >328</text><text x="1823.8" y="1017" font-size="12.8" fill="#ccccdc" text-anchor="end" font-weight="400" >296</text><text x="1886.7" y="1017" font-size="12.8" fill="#ccccdc" text-anchor="end" font-weight="400" >374</text><rect x="981" y="1034.8" width="14" height="4" fill="#8ab8ff" rx="2"/><text x="1003.5" y="1040.8" font-size="12.8" fill="#ccccdc" text-anchor="start" font-weight="400" >Inbound IPv6</text><text x="1764.2" y="1040.8" font-size="12.8" fill="#ccccdc" text-anchor="end" font-weight="400" >87</text><text x="1823.8" y="1040.8" font-size="12.8" fill="#ccccdc" text-anchor="end" font-weight="400" >64</text><text x="1886.7" y="1040.8" font-size="12.8" fill="#ccccdc" text-anchor="end" font-weight="400" >109</text><rect x="981" y="1058.7" width="14" height="4" fill="#ff780a" rx="2"/><text x="1003.5" y="1064.7" font-size="12.8" fill="#ccccdc" text-anchor="start" font-weight="400" >Outbound IPv6</text><text x="1764.2" y="1064.7" font-size="12.8" fill="#ccccdc" text-anchor="end" font-weight="400" >56</text><text x="1823.8" y="1064.7" font-size="12.8" fill="#ccccdc" text-anchor="end" font-weight="400" >35</text><text x="1886.7" y="1064.7" font-size="12.8" fill="#ccccdc" text-anchor="end" font-weight="400" >61</text><text x="25" y="86.9" font-size="15.6" fill="#ccccdc" text-anchor="start" font-weight="400" stroke="#ccccdc" stroke-width="0.25" textLength="97" lengthAdjust="spacingAndGlyphs">User statistics</text><text x="973" y="86.9" font-size="15.6" fill="#ccccdc" text-anchor="start" font-weight="400" stroke="#ccccdc" stroke-width="0.25" textLength="121" lengthAdjust="spacingAndGlyphs">File share storage</text><text x="25" y="390.9" font-size="15.6" fill="#ccccdc" text-anchor="start" font-weight="400" stroke="#ccccdc" stroke-width="0.25" textLength="84.8" lengthAdjust="spacingAndGlyphs">Online users</text><text x="973" y="390.9" font-size="15.6" fill="#ccccdc" text-anchor="start" font-weight="400" stroke="#ccccdc" stroke-width="0.25" textLength="113.9" lengthAdjust="spacingAndGlyphs">Registered users</text><text x="25" y="694.9" font-size="15.6" fill="#ccccdc" text-anchor="start" font-weight="400" stroke="#ccccdc" stroke-width="0.25" textLength="200.9" lengthAdjust="spacingAndGlyphs">Client-To-Server connections</text><text x="973" y="694.9" font-size="15.6" fill="#ccccdc" text-anchor="start" font-weight="400" stroke="#ccccdc" stroke-width="0.25" textLength="207.6" lengthAdjust="spacingAndGlyphs">Server-To-Server Connections</text><text x="29.7" y="140.2" font-size="31.5" fill="#ccccdc" text-anchor="start" font-weight="400"  textLength="87.5" lengthAdjust="spacingAndGlyphs">online</text><text x="500.3" y="140.8" font-size="31.5" fill="#ccccdc" text-anchor="start" font-weight="400"  textLength="146.5" lengthAdjust="spacingAndGlyphs">registered</text><text transform="translate(28.76,304.80) scale(1.0821,0.9992)" x="0" y="0" font-size="170" fill="#73bf69" stroke="#73bf69" stroke-width="1.922">6</text><polygon points="139.9,185.9 220,185.9 220,202.4 167.7,305.4 148.5,305.4 200.5,201.9 139.9,201.9" fill="#73bf69"/><text transform="translate(231.00,304.79) scale(1.0000,1.0034)" x="0" y="0" font-size="170" fill="#73bf69" stroke="#73bf69" stroke-width="1.997">5</text><text transform="translate(499.61,305.00) scale(1.0769,1.0017)" x="0" y="0" font-size="170" fill="#73bf69" stroke="#73bf69" stroke-width="1.924">6</text><text transform="translate(606.15,305.00) scale(1.0642,1.0017)" x="0" y="0" font-size="170" fill="#73bf69" stroke="#73bf69" stroke-width="1.936">0</text><text transform="translate(711.49,305.00) scale(1.0633,1.0017)" x="0" y="0" font-size="170" fill="#73bf69" stroke="#73bf69" stroke-width="1.937">9</text><text transform="translate(816.99,305.00) scale(1.0593,1.0017)" x="0" y="0" font-size="170" fill="#73bf69" stroke="#73bf69" stroke-width="1.941">0</text><text x="42.5" y="38" font-size="19" fill="#ccccdc" text-anchor="start" font-weight="400"  textLength="275.8" lengthAdjust="spacingAndGlyphs">Pimux.de - Prosody server stats</text><text x="1752.8" y="1123.6" font-size="14.5" fill="rgba(204,204,220,0.65)" text-anchor="start" font-weight="400"  textLength="78.6" lengthAdjust="spacingAndGlyphs">Powered by</text>
<defs><linearGradient id="gg" x1="0" y1="0" x2="0" y2="1"><stop offset="0" stop-color="#f05a28"/><stop offset="1" stop-color="#fbca0a"/></linearGradient><linearGradient id="gg2" x1="0" y1="0" x2="0" y2="1"><stop offset="0" stop-color="#f47a20"/><stop offset="1" stop-color="#f9a814"/></linearGradient></defs>
<g fill="none" stroke="#ccccdc" stroke-width="1.6" stroke-linecap="round">
<circle cx="1585.6" cy="31.8" r="6.8"/>
<path d="M1586.3 28.2 V32.5 H1583.2" stroke-width="1.9" stroke-linecap="butt"/>
<path d="M1710.5 30.3 L1714 33.8 L1717.5 30.3"/>
<circle cx="1747.1" cy="31.1" r="6.2"/>
<path d="M1744.1 31.1 H1750.1"/>
<path d="M1751.6 35.6 L1754.9 38.9"/>
<path d="M1884 30.3 L1887.5 33.8 L1891 30.3"/>
<path d="M1787.04 27.76 A6.6 6.6 0 0 1 1798.7 32.2"/>
<path d="M1785.6 25.3 V29 H1789.4" stroke-linecap="square"/>
<path d="M1785.5 32 A6.6 6.6 0 0 0 1796.34 37.06"/>
<path d="M1799 35.6 V39 H1795" stroke-linecap="square"/>
</g>
<text x="1602.6" y="38" font-size="15.8" fill="#ccccdc" textLength="93" lengthAdjust="spacingAndGlyphs">Last 24 hours</text>
<text x="1808.8" y="38" font-size="15.6" fill="#ccccdc" textLength="52.5" lengthAdjust="spacingAndGlyphs">Refresh</text>
<g transform="translate(25.2,31.8) scale(1.0)"><path d="M0.30 -8.69 L1.67 -7.00 L3.45 -6.32 L5.59 -6.66 L5.74 -4.34 L6.77 -2.45 L8.64 -1.06 L7.19 0.40 L6.89 2.08 L7.75 3.95 L5.52 4.62 L3.91 6.05 L2.98 8.18 L0.82 7.15 L-1.44 7.06 L-3.68 7.88 L-4.69 5.47 L-6.32 3.45 L-8.48 1.96 L-7.19 -0.33 L-6.61 -2.86 L-6.76 -5.48 L-4.14 -5.89 L-1.73 -6.99Z" fill="url(#gg)" stroke="url(#gg)" stroke-width="0.6" stroke-linejoin="miter"/><circle cx="1.5" cy="0.4" r="5.2" fill="#111217"/><circle cx="1.6" cy="0.9" r="3.3" fill="url(#gg2)"/><circle cx="1.9" cy="1.4" r="1.9" fill="#111217"/></g><g transform="translate(1844.2,1118) scale(0.88)"><path d="M0.30 -8.69 L1.67 -7.00 L3.45 -6.32 L5.59 -6.66 L5.74 -4.34 L6.77 -2.45 L8.64 -1.06 L7.19 0.40 L6.89 2.08 L7.75 3.95 L5.52 4.62 L3.91 6.05 L2.98 8.18 L0.82 7.15 L-1.44 7.06 L-3.68 7.88 L-4.69 5.47 L-6.32 3.45 L-8.48 1.96 L-7.19 -0.33 L-6.61 -2.86 L-6.76 -5.48 L-4.14 -5.89 L-1.73 -6.99Z" fill="url(#gg)" stroke="url(#gg)" stroke-width="0.6" stroke-linejoin="miter"/><circle cx="1.5" cy="0.4" r="5.2" fill="#111217"/><circle cx="1.6" cy="0.9" r="3.3" fill="url(#gg2)"/><circle cx="1.9" cy="1.4" r="1.9" fill="#111217"/></g><text x="1853.8" y="1123.5" font-size="13.7" fill="#e6e6ea" textLength="50" lengthAdjust="spacingAndGlyphs">Grafana</text>
</svg>
</body></html>
